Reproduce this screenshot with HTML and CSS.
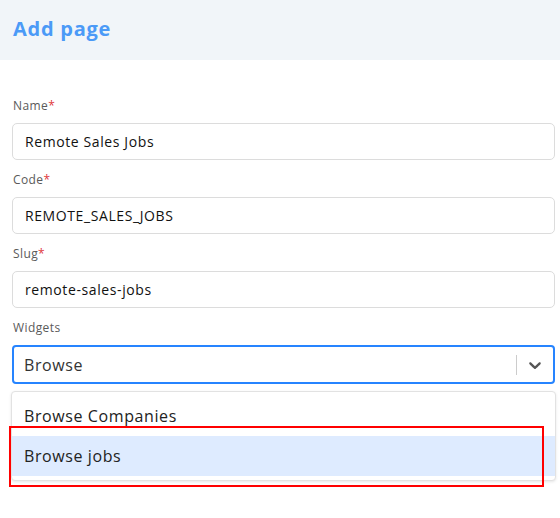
FILE: index.html
```html
<!DOCTYPE html>
<html>
<head>
<meta charset="utf-8">
<link rel="stylesheet" href="styles.css">
</head>
<body>
<header class="header"><h1 class="title">Add page</h1></header>
<main class="form">
  <div class="field">
    <label class="label">Name<span class="req">*</span></label>
    <div class="input">Remote Sales Jobs</div>
  </div>
  <div class="field">
    <label class="label">Code<span class="req">*</span></label>
    <div class="input">REMOTE_SALES_JOBS</div>
  </div>
  <div class="field">
    <label class="label">Slug<span class="req">*</span></label>
    <div class="input">remote-sales-jobs</div>
  </div>
  <div class="field">
    <label class="label">Widgets</label>
    <div class="select-wrap">
      <div class="select">
        <div class="select-value">Browse</div>
        <div class="indicators">
          <span class="sep"></span>
          <span class="chev">
            <svg width="20" height="20" viewBox="0 0 20 20"><path fill="#555" d="M4.516 7.548c0.436-0.446 1.043-0.481 1.576 0l3.908 3.747 3.908-3.747c0.533-0.481 1.141-0.446 1.574 0 0.436 0.445 0.408 1.197 0 1.615-0.406 0.418-4.695 4.502-4.695 4.502-0.217 0.223-0.502 0.335-0.787 0.335s-0.57-0.112-0.789-0.335c0 0-4.287-4.084-4.695-4.502s-0.436-1.170 0-1.615z"/></svg>
          </span>
        </div>
      </div>
      <div class="menu">
        <div class="option">Browse Companies</div>
        <div class="option focused">Browse jobs</div>
      </div>
      <div class="highlight-box"></div>
    </div>
  </div>
</main>
</body>
</html>
```
FILE: styles.css
```css
* { box-sizing: border-box; }
body {
  margin: 0;
  font-family: "Open Sans", "DejaVu Sans", sans-serif;
  background: #fff;
  width: 560px;
  height: 518px;
  overflow: hidden;
}
.header {
  background: #f1f5f9;
  height: 60px;
  display: flex;
  align-items: center;
  padding-left: 13px;
}
.title {
  margin: 0;
  font-size: 20px;
  font-weight: 700;
  color: #4b9af7;
  line-height: 1;
  letter-spacing: 0.75px;
  padding-bottom: 2px;
}
.form {
  padding: 38px 5px 0 12px;
  display: flex;
  flex-direction: column;
  gap: 12px;
}
.field { display: flex; flex-direction: column; gap: 9px; }
.label {
  font-size: 12px;
  color: #5a5a5a;
  line-height: 16px;
  padding-left: 1px;
  letter-spacing: 0.4px;
}
.req { color: #e0363b; }
.input {
  height: 37px;
  border: 1px solid #dcdcdc;
  border-radius: 5px;
  padding: 0 12px;
  display: flex;
  align-items: center;
  font-size: 14px;
  font-weight: 500;
  color: #111;
  letter-spacing: 0.6px;
}
.select-wrap { position: relative; }
.select {
  height: 39px;
  border: 2px solid #2684ff;
  border-radius: 4px;
  display: flex;
  align-items: center;
}
.select-value {
  flex: 1;
  padding: 0 10px;
  font-size: 16px;
  color: #333;
  letter-spacing: 0.6px;
}
.indicators { display: flex; align-items: center; }
.sep { width: 1px; height: 20px; background: #ccc; }
.chev { padding: 8px; display: flex; }
.menu {
  position: absolute;
  top: 46px;
  left: -1px;
  right: -1px;
  border: 1px solid #e2e2e2;
  border-radius: 4px;
  box-shadow: 0 1px 3px rgba(0,0,0,0.1);
  padding: 4px 0;
  background: #fff;
}
.option {
  height: 40px;
  display: flex;
  align-items: center;
  padding: 0 12px;
  font-size: 16px;
  color: #222;
  letter-spacing: 0.6px;
}
.option.focused { background: #deebff; }
.highlight-box {
  position: absolute;
  left: -3px;
  top: 81px;
  width: 535px;
  height: 61px;
  border: 2px solid #ff0000;
  pointer-events: none;
}
```
